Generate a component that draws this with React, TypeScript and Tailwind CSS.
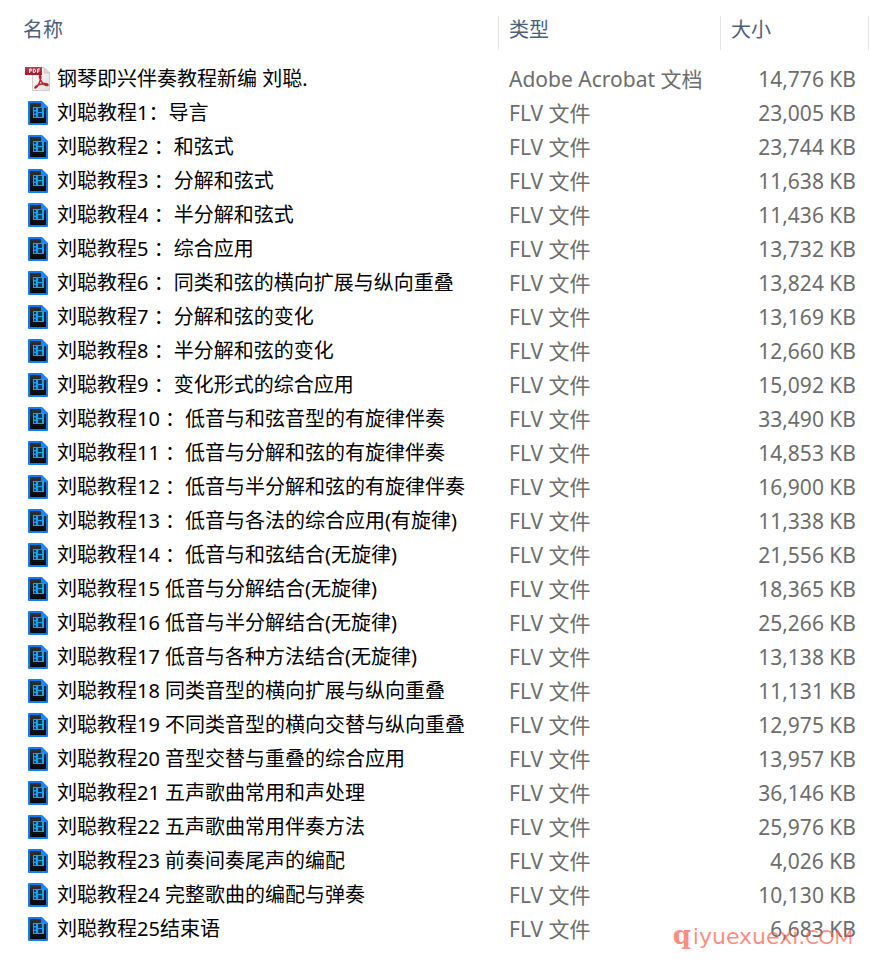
import React from "react";

type FileRow = {
  name: string;
  size: string;
  pdf?: boolean;
};

const files: FileRow[] = [
  { name: "钢琴即兴伴奏教程新编 刘聪.", size: "14,776 KB", pdf: true },
  { name: "刘聪教程1：导言", size: "23,005 KB" },
  { name: "刘聪教程2 ：和弦式", size: "23,744 KB" },
  { name: "刘聪教程3 ：分解和弦式", size: "11,638 KB" },
  { name: "刘聪教程4 ：半分解和弦式", size: "11,436 KB" },
  { name: "刘聪教程5 ：综合应用", size: "13,732 KB" },
  { name: "刘聪教程6 ：同类和弦的横向扩展与纵向重叠", size: "13,824 KB" },
  { name: "刘聪教程7 ：分解和弦的变化", size: "13,169 KB" },
  { name: "刘聪教程8 ：半分解和弦的变化", size: "12,660 KB" },
  { name: "刘聪教程9 ：变化形式的综合应用", size: "15,092 KB" },
  { name: "刘聪教程10 ：低音与和弦音型的有旋律伴奏", size: "33,490 KB" },
  { name: "刘聪教程11 ：低音与分解和弦的有旋律伴奏", size: "14,853 KB" },
  { name: "刘聪教程12 ：低音与半分解和弦的有旋律伴奏", size: "16,900 KB" },
  { name: "刘聪教程13 ：低音与各法的综合应用(有旋律)", size: "11,338 KB" },
  { name: "刘聪教程14 ：低音与和弦结合(无旋律)", size: "21,556 KB" },
  { name: "刘聪教程15 低音与分解结合(无旋律)", size: "18,365 KB" },
  { name: "刘聪教程16 低音与半分解结合(无旋律)", size: "25,266 KB" },
  { name: "刘聪教程17 低音与各种方法结合(无旋律)", size: "13,138 KB" },
  { name: "刘聪教程18 同类音型的横向扩展与纵向重叠", size: "11,131 KB" },
  { name: "刘聪教程19 不同类音型的横向交替与纵向重叠", size: "12,975 KB" },
  { name: "刘聪教程20 音型交替与重叠的综合应用", size: "13,957 KB" },
  { name: "刘聪教程21 五声歌曲常用和声处理", size: "36,146 KB" },
  { name: "刘聪教程22 五声歌曲常用伴奏方法", size: "25,976 KB" },
  { name: "刘聪教程23 前奏间奏尾声的编配", size: "4,026 KB" },
  { name: "刘聪教程24 完整歌曲的编配与弹奏", size: "10,130 KB" },
  { name: "刘聪教程25结束语", size: "6,683 KB" },
];

const PdfIcon: React.FC = () => (
  <svg width="28" height="26" viewBox="0 0 28 26" className="shrink-0" aria-hidden="true">
    <defs>
      <linearGradient id="paper" x1="0" y1="0" x2="1" y2="1">
        <stop offset="0" stopColor="#ffffff" />
        <stop offset="1" stopColor="#dedede" />
      </linearGradient>
      <linearGradient id="band" x1="0" y1="0" x2="0" y2="1">
        <stop offset="0" stopColor="#c8384b" />
        <stop offset="1" stopColor="#9c1c2c" />
      </linearGradient>
    </defs>
    <path d="M8.5 1.5h11.5l5.5 5.5v17.5h-17z" fill="url(#paper)" stroke="#cfcfcf" />
    <path d="M20 1.5v5.5h5.5z" fill="#dcdcdc" stroke="#bcbcbc" strokeWidth="0.6" />
    <path d="M1 1h17v8H1z" fill="url(#band)" />
    {/* PDF label strokes */}
    <g fill="none" stroke="#fff" strokeWidth="1">
      <path d="M5.5 7V3h1.7v2H5.5" />
      <path d="M9.3 6.5V3.1h.9c1.8 0 1.8 3.4 0 3.4z" />
      <path d="M13.6 7V3h2.2M13.6 5h1.8" />
    </g>
    <path
      d="M16.2 9.5c-1.5 0-.5 3.3 1 5.7 1.7 2.7 4.2 4.5 6 4.4 1.7-.2.8-2.2-2.7-2-4 .2-9.2 2-9.6 3.8-.2 1.5 2 .3 3.7-3 1.5-3 3.2-8.9 1.6-8.9z"
      fill="none"
      stroke="#b8222d"
      strokeWidth="1.5"
    />
  </svg>
);

const VideoIcon: React.FC = () => (
  <svg width="28" height="26" viewBox="0 0 28 26" className="shrink-0" aria-hidden="true">
    <defs>
      <linearGradient id="sheet" x1="0" y1="0" x2="0" y2="1">
        <stop offset="0" stopColor="#2c3238" />
        <stop offset="1" stopColor="#05090d" />
      </linearGradient>
    </defs>
    <path
      d="M5 1h13l6 6v17a1 1 0 0 1-1 1H5a1 1 0 0 1-1-1V2a1 1 0 0 1 1-1z"
      fill="#0a7cf5"
    />
    <path d="M6 3h11v5h5v15H6z" fill="url(#sheet)" />
    <path d="M17 1l7 7h-7z" fill="#1687ff" />
    <path d="M9 7h11v11H9z" fill="#12a4f5" />
    <path d="M14 8h4v4h-4zM14 13h4v4h-4z" fill="#10344d" />
    <path d="M10 8h2v2h-2zM10 11.5h2v2h-2zM10 15h2v2h-2z" fill="#10344d" />
  </svg>
);

const App: React.FC = () => {
  return (
    <main className="relative min-h-screen bg-white pt-4 pb-6 pr-5 font-['Noto_Sans','Noto_Sans_CJK_SC',sans-serif] text-[20px] leading-[34px]">
      <table className="w-full table-fixed border-collapse whitespace-nowrap">
        <colgroup>
          <col />
          <col className="w-[222px]" />
          <col className="w-[148px]" />
        </colgroup>
        <thead>
          <tr className="text-left text-[#4c607a]">
            <th className="pb-3 font-normal">
              <div className="h-[34px] border-r border-[#e5e5e5] pl-[23px] leading-[28px]">名称</div>
            </th>
            <th className="pb-3 font-normal">
              <div className="h-[34px] border-r border-[#e5e5e5] pl-[10px] leading-[28px]">类型</div>
            </th>
            <th className="pb-3 font-normal">
              <div className="h-[34px] border-r border-[#e5e5e5] pl-[10px] leading-[28px]">大小</div>
            </th>
          </tr>
        </thead>
        <tbody>
          {files.map((file) => (
            <tr key={file.name} className="h-[34px] text-[21px] text-[#6d6d6d]">
              <td className="p-0 text-[20px] text-black">
                <div className="flex h-[34px] items-center gap-[5px] pl-6">
                  {file.pdf ? <PdfIcon /> : <VideoIcon />}
                  <span>{file.name}</span>
                </div>
              </td>
              <td className="h-[34px] py-0 pl-[10px]">
                {file.pdf ? "Adobe Acrobat 文档" : "FLV 文件"}
              </td>
              <td className="h-[34px] py-0 pr-[13px] text-right">{file.size}</td>
            </tr>
          ))}
        </tbody>
      </table>

      {/* Site watermark over the last row */}
      <div className="absolute right-9 bottom-4 flex items-baseline text-[#ff5a46]/70">
        <span className="mr-[2px] font-['DejaVu_Serif',serif] text-[26px] font-bold">q</span>
        <span className="font-['DejaVu_Sans',sans-serif] text-[22px]">iyuexuexi.</span>
        <span className="font-['Lato',sans-serif] text-[20px]">COM</span>
      </div>
    </main>
  );
};

export default App;
